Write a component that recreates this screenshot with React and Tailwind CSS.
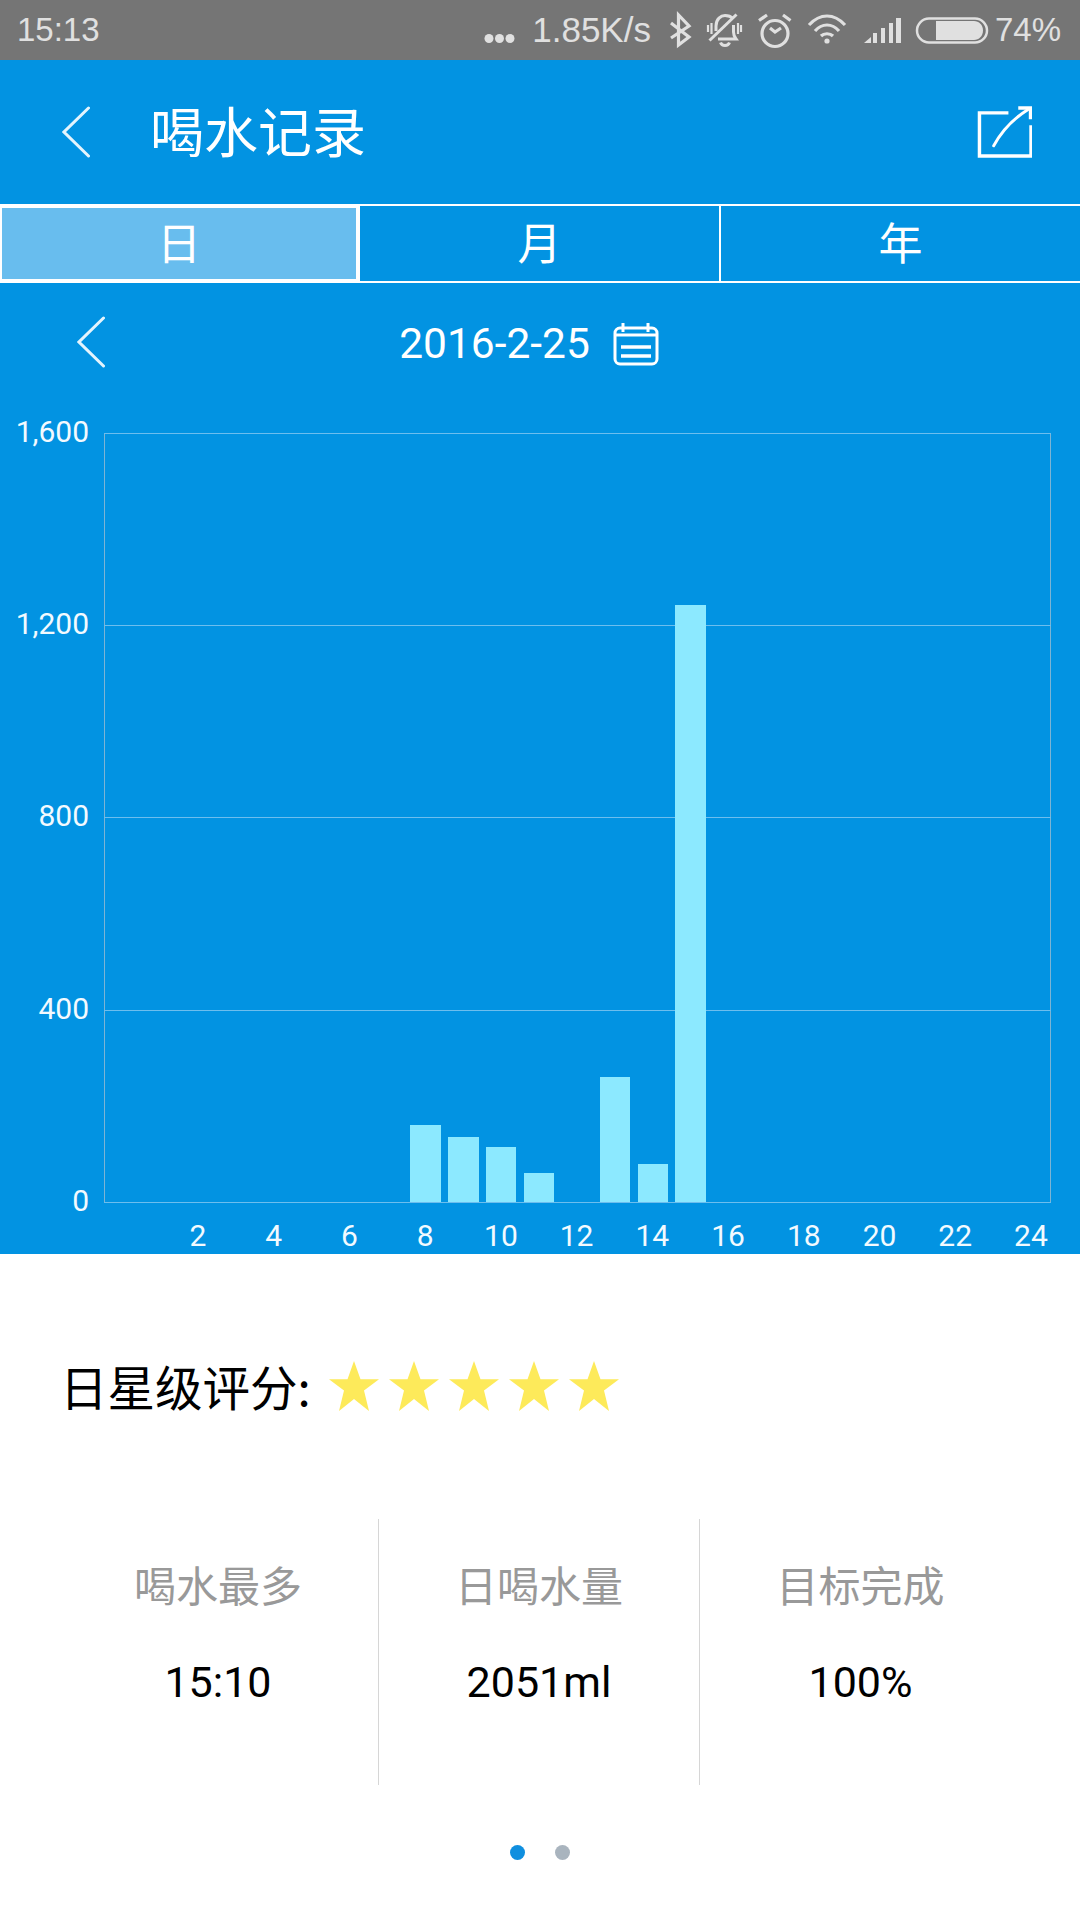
const bars = [
  [8, 410, 441, 1125],
  [9, 448, 479, 1137],
  [10, 486, 516, 1147],
  [11, 524, 554, 1173],
  [13, 600, 630, 1077],
  [14, 638, 668, 1164],
  [15, 675, 706, 605],
];
const yLabels = [
  ["1,600", 433],
  ["1,200", 625],
  ["800", 817],
  ["400", 1010],
  ["0", 1202],
];
const xLabels = [2, 4, 6, 8, 10, 12, 14, 16, 18, 20, 22, 24];
const OY = 400;

function Chevron({ className }) {
  return (
    <svg className={className} viewBox="0 0 28 52" fill="none" stroke="#e4f4fd" strokeWidth="3" strokeLinecap="round" strokeLinejoin="miter">
      <path d="M26.5 2 L2 26 L26.5 50" />
    </svg>
  );
}

function Star() {
  return (
    <svg className="w-[50px] h-[50px]" viewBox="0 0 50 50">
      <path d="M25 0 L31.5 18.3 L50 18.3 L35 29.5 L40 50 L25 38 L10 50 L15 29.5 L0 18.3 L18.5 18.3 Z" fill="#fdea5a" />
    </svg>
  );
}

function StatusIcons() {
  return (
    <svg className="absolute left-0 top-0 w-[1080px] h-[60px]" viewBox="0 0 1080 60" fill="none" stroke="#e0e0e0">
      <g fill="#e0e0e0" stroke="none">
        <circle cx="489" cy="38.5" r="4.5" />
        <circle cx="499.5" cy="38.5" r="4.5" />
        <circle cx="510" cy="38.5" r="4.5" />
      </g>
      <path d="M671 23 L689 37 L678.5 45 V15 L689 26 L671 38" strokeWidth="3.2" />
      <g strokeWidth="3">
        <path d="M716 31 V26 C716 19 721 15.5 725 15.5 C728 15.5 731 16.5 733 18.5" />
        <path d="M733.5 25 V32 C733.5 35 734.5 37 736 39 H718" />
        <path d="M720.5 42.5 C722 46.5 728 46.5 729.5 42.5" />
        <path d="M711.5 23 V34 M708 25 V32 M738 23 V34 M741 25 V32" strokeWidth="2.2" />
        <path d="M709.5 40.5 L736.5 14.5" />
      </g>
      <g strokeWidth="3.2">
        <circle cx="775" cy="33.5" r="13" />
        <path d="M770 28 L775 32 L781 28" />
        <path d="M759 20.5 L767 15 M790.5 20.5 L783 15" />
      </g>
      <g strokeWidth="3.2">
        <path d="M809 25 C820 13 834 13 845 25" />
        <path d="M815 31 C822 23 832 23 839 31" />
        <path d="M821 36 C824 33 830 33 833 36" />
      </g>
      <circle cx="827" cy="41" r="2.6" fill="#e0e0e0" stroke="none" />
      <g fill="#e0e0e0" stroke="none">
        <path d="M864 43 L871 37 V43 Z" />
        <rect x="873" y="33" width="4" height="10" />
        <rect x="881" y="28" width="4" height="15" />
        <rect x="889" y="23" width="4" height="20" />
        <rect x="896" y="18" width="5" height="25" />
      </g>
      <rect x="917" y="18.5" width="70" height="24" rx="12" strokeWidth="2.5" />
      <path d="M936 21 H974 C979 21 983 25 983 30.5 C983 36 979 40 974 40 H936 Z" fill="#e0e0e0" stroke="none" />
    </svg>
  );
}

function Chart() {
  return (
    <svg className="w-[1080px] h-[854px] block font-['Roboto','Liberation_Sans',sans-serif]" viewBox={`0 ${OY} 1080 854`}>
      <line x1="104.5" y1="433" x2="104.5" y2="1202" stroke="#7db4d4" strokeWidth="1" />
      <line x1="1050.5" y1="433" x2="1050.5" y2="1202" stroke="#7db4d4" strokeWidth="1" />
      {yLabels.map(([t, y]) => (
        <g key={t}>
          <line x1="104" y1={y + 0.5} x2="1051" y2={y + 0.5} stroke="#6dbeee" strokeWidth="1" />
          <text x="89" y={y + 9} fontSize="30" fill="#f2faff" textAnchor="end">{t}</text>
        </g>
      ))}
      {bars.map(([h, x1, x2, top]) => (
        <rect key={h} x={x1} y={top} width={x2 - x1} height={1202 - top} fill="#8ce9ff" />
      ))}
      {xLabels.map((h) => (
        <text key={h} x={122.3 + 37.86 * h} y="1246" fontSize="30" fill="#f2faff" textAnchor="middle">{h}</text>
      ))}
    </svg>
  );
}

function Stat({ label, value, border }) {
  return (
    <div className={`flex flex-col items-center pt-[37px] ${border ? "border-r border-[#d6d6d6]" : ""}`}>
      <div className="text-[42px] leading-[56px] text-[#999999]">{label}</div>
      <div className="mt-[42px] text-[43px] leading-[56px] text-black font-['Roboto','Noto_Sans_CJK_SC',sans-serif]">{value}</div>
    </div>
  );
}

export default function App() {
  return (
    <div className="w-[1080px] h-[1920px] bg-white overflow-hidden font-['Noto_Sans_CJK_SC',sans-serif]">
      <div className="relative h-[60px] bg-[#757575] flex items-center justify-between pl-[17px] pr-[19px] text-[33px] text-[#e0e0e0] font-['Liberation_Sans',sans-serif]">
        <span>15:13</span>
        <StatusIcons />
        <div className="flex items-center gap-[344px]">
          <span className="text-[35px]">1.85K/s</span>
          <span>74%</span>
        </div>
      </div>

      <div className="bg-[#0293e2]">
        <div className="h-[144px] flex items-center pl-[62px] pr-[48px] text-white">
          <Chevron className="w-[28px] h-[52px]" />
          <div className="ml-[60px] -mt-[5px] text-[54px] leading-none">喝水记录</div>
          <svg className="ml-auto w-[55px] h-[54px]" viewBox="0 0 56 54" fill="none" stroke="#fff">
            <path d="M32 7.5 H2.5 V51.5 H55 V20" strokeWidth="3.5" />
            <path d="M17 41 C24 28 36 14 52 4" strokeWidth="3" strokeLinecap="round" />
            <path d="M42 2.5 H54.5 V14" strokeWidth="3.5" />
          </svg>
        </div>

        <div className="h-[79px] border-y-2 border-white flex text-white text-[44px] leading-none">
          <div className="w-[360px] border-2 border-r-4 border-white bg-[#68bdee] flex items-center justify-center pb-[5px]">日</div>
          <div className="w-[361px] border-r-2 border-white flex items-center justify-center pb-[5px]">月</div>
          <div className="flex-1 flex items-center justify-center pb-[5px]">年</div>
        </div>

        <div className="relative h-[117px] flex items-start justify-center pr-[22px] text-white">
          <Chevron className="absolute left-[77px] top-[33px] w-[28px] h-[52px]" />
          <span className="mt-[36px] text-[42.5px] leading-[50px] font-['Roboto',sans-serif]">2016-2-25</span>
          <svg className="ml-[23px] mt-[39px] w-[46px] h-[44px]" viewBox="0 0 46 44" fill="none" stroke="#fff" strokeWidth="3">
            <rect x="2" y="6" width="42" height="36" rx="5" />
            <path d="M2 13 H44" />
            <path d="M10 1 V10 M35 1 V10" />
            <path d="M8 25 H38 M8 34 H38" strokeWidth="3.5" />
          </svg>
        </div>

        <Chart />
      </div>

      <div className="flex items-center pl-[60px] pt-[106px] h-[158px]">
        <span className="text-[47.5px] leading-[60px] text-black">日星级评分:</span>
        <div className="flex gap-[10px] ml-[18px]"><Star /><Star /><Star /><Star /><Star /></div>
      </div>

      <div className="mt-[107px] mx-[58px] grid grid-cols-[321px_321px_321px] h-[266px]">
        <Stat label="喝水最多" value="15:10" border />
        <Stat label="日喝水量" value="2051ml" border />
        <Stat label="目标完成" value="100%" />
      </div>

      <div className="mt-[60px] flex justify-center gap-[30px]">
        <div className="w-[15px] h-[15px] rounded-full bg-[#0f8fdf]" />
        <div className="w-[15px] h-[15px] rounded-full bg-[#a9b4be]" />
      </div>
    </div>
  );
}
